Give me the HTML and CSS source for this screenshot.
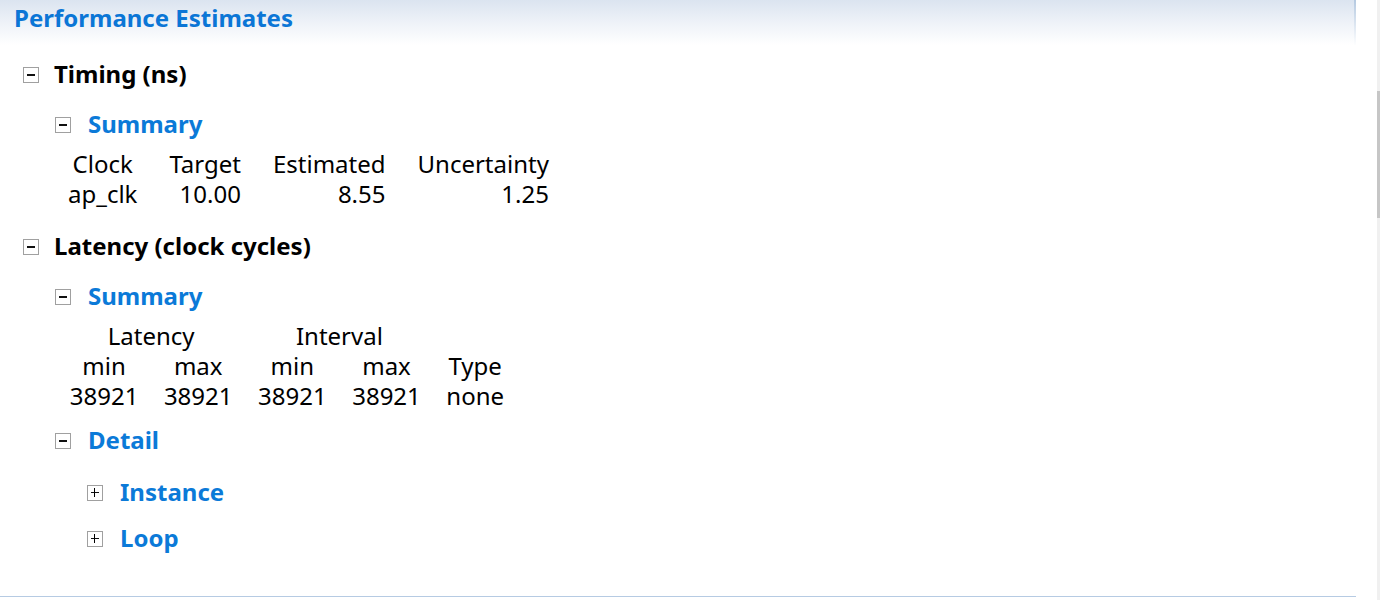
FILE: index.html
```html
<!DOCTYPE html>
<html>
<head>
<meta charset="utf-8">
<link rel="stylesheet" href="styles.css">
</head>
<body>
<div class="panel">
  <div class="header"><span class="title">Performance Estimates</span></div>
  <div class="content">
    <div class="node l1 first">
      <span class="box minus"></span><span class="label dark">Timing (ns)</span>
    </div>
    <div class="node l2 sub">
      <span class="box minus"></span><span class="label blue">Summary</span>
    </div>
    <table class="tbl t-timing">
      <tr><th>Clock</th><th>Target</th><th>Estimated</th><th>Uncertainty</th></tr>
      <tr><td class="c">ap_clk</td><td>10.00</td><td>8.55</td><td>1.25</td></tr>
    </table>
    <div class="node l1 sec">
      <span class="box minus"></span><span class="label dark">Latency (clock cycles)</span>
    </div>
    <div class="node l2 sub">
      <span class="box minus"></span><span class="label blue">Summary</span>
    </div>
    <table class="tbl t-latency">
      <tr><th colspan="2">Latency</th><th colspan="2">Interval</th><th></th></tr>
      <tr><th>min</th><th>max</th><th>min</th><th>max</th><th>Type</th></tr>
      <tr><td>38921</td><td>38921</td><td>38921</td><td>38921</td><td>none</td></tr>
    </table>
    <div class="node l2 detail">
      <span class="box minus"></span><span class="label blue">Detail</span>
    </div>
    <div class="node l3 inst">
      <span class="box plus"></span><span class="label blue">Instance</span>
    </div>
    <div class="node l3 loop">
      <span class="box plus"></span><span class="label blue">Loop</span>
    </div>
  </div>
</div>
<div class="scroll"><div class="thumb"></div></div>
</body>
</html>
```
FILE: styles.css
```css
html, body {
  margin: 0;
  padding: 0;
  background: #ffffff;
}
body {
  width: 1380px;
  height: 600px;
  overflow: hidden;
  display: flex;
  font-family: "Noto Sans", "Open Sans", sans-serif;
  color: #000;
}
.panel {
  width: 1356px;
  flex: none;
  height: 596px;
  border-bottom: 1px solid #b6cbe3;
  box-sizing: content-box;
  display: flex;
  flex-direction: column;
}
.header {
  height: 45px;
  flex: none;
  padding-left: 14px;
  background: linear-gradient(to bottom, #dbe4f0 0%, #eef2f8 50%, #ffffff 100%);
  border-style: solid;
  border-width: 0 2px 0 0;
  border-image: linear-gradient(to bottom, #b3c8e0, #ffffff) 1;
  box-sizing: border-box;
}
.title {
  display: block;
  font-size: 24px;
  font-weight: 700;
  color: #0b76d6;
  line-height: 36px;
}
.content {
  flex: 1;
}
.node {
  display: flex;
  align-items: center;
  height: 30px;
}
.l1 { padding-left: 23px; }
.l2 { padding-left: 55px; }
.l3 { padding-left: 87px; }
.l2 .box, .l3 .box { margin-right: 17px; }
.first { margin-top: 14px; }
.sub { margin-top: 20px; }
.sec { margin-top: 22px; }
.detail { margin-top: 14px; }
.inst { margin-top: 22px; }
.loop { margin-top: 16px; }
.box {
  width: 16px;
  height: 16px;
  border: 1px solid #a0a0a0;
  box-sizing: border-box;
  flex: none;
  position: relative;
  margin-right: 15px;
  margin-top: 2px;
  background: #fff;
}
.box::before {
  content: "";
  position: absolute;
  left: 3px;
  right: 3px;
  top: 6px;
  height: 2px;
  background: #111;
}
.plus::before {
  height: 1px;
  top: 6px;
}
.plus::after {
  content: "";
  position: absolute;
  top: 2px;
  bottom: 3px;
  left: 6px;
  width: 1px;
  background: #000;
}
.label {
  font-size: 24px;
  font-weight: 700;
  line-height: 30px;
}
.dark { color: #000; }
.blue { color: #0b7ad8; }
.tbl {
  border-collapse: collapse;
  margin-top: 10px;
  font-size: 24px;
}
.t-timing { margin-left: 52px; }
.t-latency { margin-left: 57px; }
.tbl th, .tbl td {
  height: 30px;
  line-height: 30px;
  font-weight: 400;
  white-space: nowrap;
}
.t-timing th, .t-timing td { padding: 0 16px; }
.t-latency th, .t-latency td { padding: 0 12.75px; }
.tbl th { text-align: center; }
.tbl td { text-align: right; }
.tbl td.c { text-align: center; }
.scroll {
  margin-left: auto;
  width: 3px;
  height: 600px;
  background: #f0f0f0;
  flex: none;
}
.thumb {
  margin-top: 91px;
  height: 127px;
  background: #c6c6c6;
}
```
